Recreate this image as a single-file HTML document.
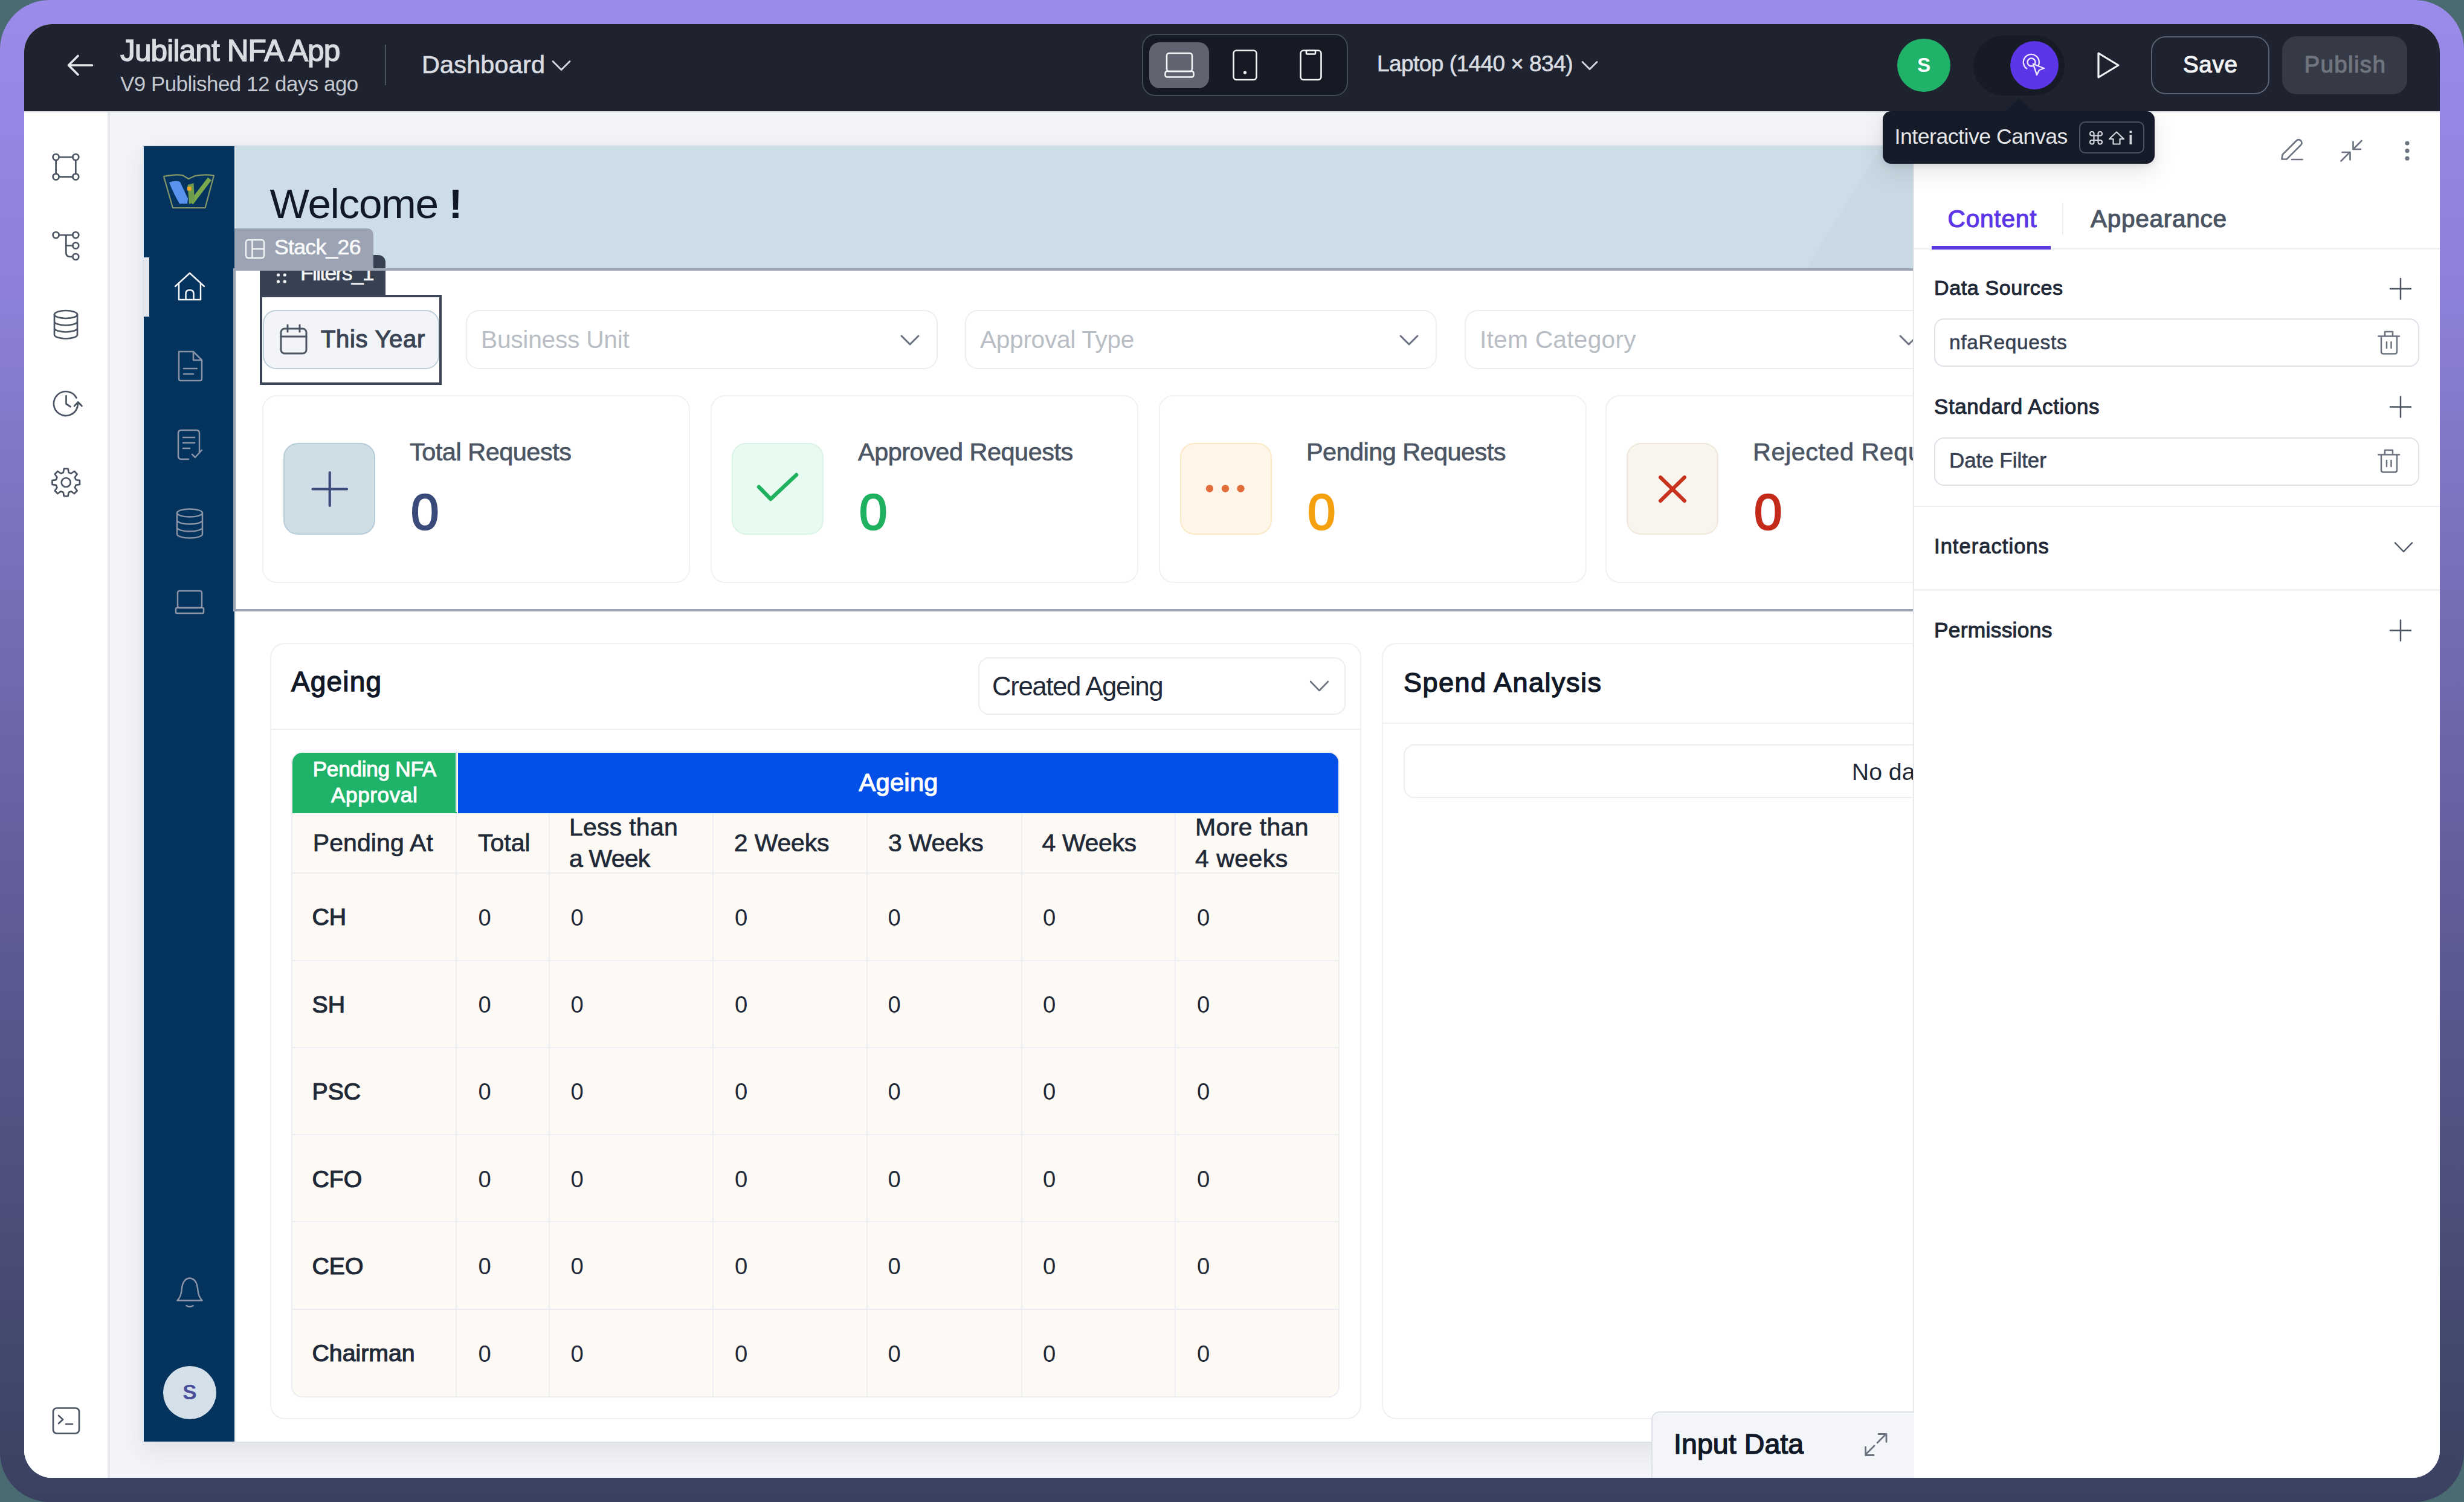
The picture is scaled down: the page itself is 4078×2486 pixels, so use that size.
<!DOCTYPE html><html><head><meta charset="utf-8"><style>
html,body{margin:0;padding:0;}
body{width:4078px;height:2486px;position:relative;overflow:hidden;background:#4b6b72;font-family:"Liberation Sans",sans-serif;}
.r{position:absolute;}
.t{position:absolute;white-space:nowrap;line-height:1;}
.t b{font-weight:700;}
#bg{position:absolute;left:0;top:0;width:4078px;height:2486px;border-radius:82px;background:linear-gradient(180deg,#9b8bea 0%,#8c80d8 20%,#736cb3 42%,#5e5b95 62%,#4a4d78 82%,#3a4160 100%);}
#app{position:absolute;left:0;top:0;width:4078px;height:2486px;clip-path:inset(40px round 46px);background:#fff;}
svg{position:absolute;left:0;top:0;}
</style></head><body>
<div id="bg"></div>
<div id="app">
<div class="r" style="left:40.0px;top:40.0px;width:3998.0px;height:144.0px;background:#1f2330;"></div>
<div class="r" style="left:40.0px;top:184.0px;width:3998.0px;height:2.0px;background:#d5d8de;"></div>
<div id="t0" class="t" style="left:199.0px;top:59.7px;font-size:49.56px;font-weight:400;color:#d9dce1;letter-spacing:-0.87px;-webkit-text-stroke:1.49px #d9dce1;">Jubilant NFA App</div>
<div id="t1" class="t" style="left:199.0px;top:121.5px;font-size:34.88px;font-weight:400;color:#c4c8cf;letter-spacing:-0.48px;">V9 Published 12 days ago</div>
<div class="r" style="left:637.0px;top:74.0px;width:2.0px;height:67.0px;background:#4b5260;"></div>
<div id="t2" class="t" style="left:698.0px;top:87.0px;font-size:41.28px;font-weight:400;color:#d9dce1;letter-spacing:0.25px;-webkit-text-stroke:0.74px #d9dce1;">Dashboard</div>
<div class="r" style="left:1890.0px;top:56.0px;width:341.0px;height:103.0px;background:#151a25;border:2px solid #434955;border-radius:22px;box-sizing:border-box;"></div>
<div class="r" style="left:1902.0px;top:70.0px;width:99.0px;height:75.5px;background:#5f6470;border-radius:17px;"></div>
<div id="t3" class="t" style="left:2279.0px;top:87.7px;font-size:36.92px;font-weight:400;color:#d9dce1;letter-spacing:-0.50px;-webkit-text-stroke:0.66px #d9dce1;">Laptop (1440 × 834)</div>
<div class="r" style="left:3140.0px;top:63.5px;width:88.0px;height:88.0px;background:#1fb268;border-radius:50%;"></div>
<div class="t" style="left:3140px;width:88px;text-align:center;top:91.2px;font-size:33.3px;font-weight:700;color:#fff;">S</div>
<div class="r" style="left:3266.0px;top:59.0px;width:151.0px;height:98.5px;background:#161b26;border-radius:50px;"></div>
<div class="r" style="left:3327.0px;top:68.0px;width:80.0px;height:80.0px;background:#5b35e6;border-radius:50%;"></div>
<div class="r" style="left:3560.0px;top:60.0px;width:195.5px;height:96.0px;border:2px solid #5b6170;border-radius:24px;box-sizing:border-box;"></div>
<div id="t4" class="t" style="left:3613.0px;top:88.4px;font-size:38.52px;font-weight:400;color:#f3f4f6;letter-spacing:0.67px;-webkit-text-stroke:1.16px #f3f4f6;">Save</div>
<div class="r" style="left:3776.5px;top:60.0px;width:207.5px;height:96.0px;background:#353a46;border-radius:24px;"></div>
<div id="t5" class="t" style="left:3813.5px;top:88.4px;font-size:38.52px;font-weight:400;color:#70757f;letter-spacing:1.33px;-webkit-text-stroke:1.16px #70757f;">Publish</div>
<div class="r" style="left:40.0px;top:186.0px;width:138.0px;height:2260.0px;background:#fff;"></div>
<div class="r" style="left:178.0px;top:186.0px;width:4.0px;height:2260.0px;background:#e8e9ee;"></div>
<div class="r" style="left:182.0px;top:186.0px;width:2984.0px;height:2260.0px;background:#f3f4f8;"></div>
<div class="r" style="left:236.0px;top:240.0px;width:3064.0px;height:2148.0px;background:#fff;border:2px solid #dde2ea;box-sizing:border-box;box-shadow:0 14px 36px rgba(30,40,60,0.09);"></div>
<div class="r" style="left:238.0px;top:242.0px;width:150.0px;height:2144.0px;background:#04335e;"></div>
<div class="r" style="left:388.0px;top:242.0px;width:2.0px;height:2144.0px;background:#e6ebf0;"></div>
<div class="r" style="left:238.0px;top:426.0px;width:9.0px;height:98.0px;background:#e3e6ec;"></div>
<div class="r" style="left:390.0px;top:242.0px;width:2910.0px;height:204.0px;background:#cddde7;"></div>
<div id="t6" class="t" style="left:446.6px;top:303.0px;font-size:69.33px;font-weight:400;color:#111827;letter-spacing:-1.38px;">Welcome <b>!</b></div>
<div class="r" style="left:270.0px;top:2261.0px;width:88.0px;height:88.0px;background:#d3e0ea;border-radius:50%;"></div>
<div class="t" style="left:270px;width:88px;text-align:center;top:2286.5px;font-size:34.9px;font-weight:700;color:#4a4e9a;">S</div>
<div class="r" style="left:430.0px;top:422.0px;width:208.0px;height:68.0px;background:#374151;border-radius:0 12px 0 0;"></div>
<div id="t7" class="t" style="left:497.0px;top:434.8px;font-size:35.61px;font-weight:400;color:#f3f4f6;letter-spacing:-1.75px;-webkit-text-stroke:0.64px #f3f4f6;">Filters_1</div>
<div class="r" style="left:386.0px;top:444.0px;width:2914.0px;height:568.0px;border:4px solid #9ca3b1;border-right:none;box-sizing:border-box;"></div>
<div class="r" style="left:388.0px;top:378.0px;width:230.0px;height:70.0px;background:#9ca3b3;border-radius:0 10px 0 0;"></div>
<div id="t8" class="t" style="left:454.0px;top:392.3px;font-size:35.61px;font-weight:400;color:#f9fafb;letter-spacing:-0.71px;-webkit-text-stroke:0.64px #f9fafb;">Stack_26</div>
<div class="r" style="left:430.0px;top:487.5px;width:301.0px;height:149.5px;border:4px solid #3b4557;box-sizing:border-box;"></div>
<div class="r" style="left:435.0px;top:513.0px;width:292.0px;height:98.0px;background:#f3f4f7;border:2px solid #bccfdb;border-radius:22px;box-sizing:border-box;"></div>
<div id="t9" class="t" style="left:531.0px;top:541.7px;font-size:39.97px;font-weight:400;color:#3b4454;letter-spacing:0.70px;-webkit-text-stroke:1.20px #3b4454;">This Year</div>
<div class="r" style="left:771.0px;top:513.0px;width:781.0px;height:98.0px;border:2px solid #eceef2;border-radius:22px;box-sizing:border-box;"></div>
<div id="t10" class="t" style="left:796.0px;top:541.5px;font-size:40.70px;font-weight:400;color:#b9bdc4;letter-spacing:-0.25px;">Business Unit</div>
<div class="r" style="left:1597.0px;top:513.0px;width:781.0px;height:98.0px;border:2px solid #eceef2;border-radius:22px;box-sizing:border-box;"></div>
<div id="t11" class="t" style="left:1622.0px;top:541.5px;font-size:40.70px;font-weight:400;color:#b9bdc4;letter-spacing:-0.33px;">Approval Type</div>
<div class="r" style="left:2424.0px;top:513.0px;width:781.0px;height:98.0px;border:2px solid #eceef2;border-radius:22px;box-sizing:border-box;"></div>
<div id="t12" class="t" style="left:2449.0px;top:541.5px;font-size:40.70px;font-weight:400;color:#b9bdc4;letter-spacing:0.25px;">Item Category</div>
<div class="r" style="left:434.0px;top:654.0px;width:708.0px;height:311.0px;border:2px solid #f0f1f5;border-radius:24px;box-sizing:border-box;"></div>
<div class="r" style="left:469.0px;top:733.0px;width:152.0px;height:152.0px;background:#cfdde7;border:2px solid #b9cdd9;border-radius:24px;box-sizing:border-box;"></div>
<div id="t13" class="t" style="left:678.0px;top:728.4px;font-size:41.42px;font-weight:400;color:#4b5563;letter-spacing:-0.46px;-webkit-text-stroke:0.75px #4b5563;">Total Requests</div>
<div id="t14" class="t" style="left:680.0px;top:806.2px;font-size:83.58px;font-weight:400;color:#3a4a7a;-webkit-text-stroke:2.51px #3a4a7a;">0</div>
<div class="r" style="left:1176.0px;top:654.0px;width:708.0px;height:311.0px;border:2px solid #f0f1f5;border-radius:24px;box-sizing:border-box;"></div>
<div class="r" style="left:1211.0px;top:733.0px;width:152.0px;height:152.0px;background:#e9fbf1;border:2px solid #dcf3e6;border-radius:24px;box-sizing:border-box;"></div>
<div id="t15" class="t" style="left:1420.0px;top:728.4px;font-size:41.42px;font-weight:400;color:#4b5563;letter-spacing:-0.47px;-webkit-text-stroke:0.75px #4b5563;">Approved Requests</div>
<div id="t16" class="t" style="left:1422.0px;top:806.2px;font-size:83.58px;font-weight:400;color:#1fb160;-webkit-text-stroke:2.51px #1fb160;">0</div>
<div class="r" style="left:1918.0px;top:654.0px;width:708.0px;height:311.0px;border:2px solid #f0f1f5;border-radius:24px;box-sizing:border-box;"></div>
<div class="r" style="left:1953.0px;top:733.0px;width:152.0px;height:152.0px;background:#fff6e9;border:2px solid #fde8c6;border-radius:24px;box-sizing:border-box;"></div>
<div id="t17" class="t" style="left:2162.0px;top:728.4px;font-size:41.42px;font-weight:400;color:#4b5563;letter-spacing:-0.53px;-webkit-text-stroke:0.75px #4b5563;">Pending Requests</div>
<div id="t18" class="t" style="left:2164.0px;top:806.2px;font-size:83.58px;font-weight:400;color:#f5a00f;-webkit-text-stroke:2.51px #f5a00f;">0</div>
<div class="r" style="left:2657.0px;top:654.0px;width:708.0px;height:311.0px;border:2px solid #f0f1f5;border-radius:24px;box-sizing:border-box;"></div>
<div class="r" style="left:2692.0px;top:733.0px;width:152.0px;height:152.0px;background:#f8f4ee;border:2px solid #eee8dc;border-radius:24px;box-sizing:border-box;"></div>
<div id="t19" class="t" style="left:2901.0px;top:728.4px;font-size:41.42px;font-weight:400;color:#4b5563;letter-spacing:0.50px;-webkit-text-stroke:0.75px #4b5563;">Rejected Requests</div>
<div id="t20" class="t" style="left:2903.0px;top:806.2px;font-size:83.58px;font-weight:400;color:#c42a1a;-webkit-text-stroke:2.51px #c42a1a;">0</div>
<div class="r" style="left:447.0px;top:1064.0px;width:1806.0px;height:1285.0px;border:2px solid #eef0f3;border-radius:24px;box-sizing:border-box;"></div>
<div class="r" style="left:449.0px;top:1206.0px;width:1802.0px;height:2.0px;background:#eef0f3;"></div>
<div id="t21" class="t" style="left:482.0px;top:1106.1px;font-size:45.93px;font-weight:400;color:#111827;letter-spacing:1.20px;-webkit-text-stroke:1.38px #111827;">Ageing</div>
<div class="r" style="left:1618.5px;top:1088.0px;width:608.5px;height:95.0px;border:2px solid #eceef2;border-radius:18px;box-sizing:border-box;"></div>
<div id="t22" class="t" style="left:1642.0px;top:1113.5px;font-size:43.90px;font-weight:400;color:#1f2937;letter-spacing:-1.46px;">Created Ageing</div>
<div class="r" style="left:482px;top:1244px;width:1735px;height:1069px;background:#fdf9f4;border-radius:18px;overflow:hidden;border:2px solid #eceef2;box-sizing:border-box;"><div class="r" style="left:0;top:0;width:272px;height:100px;background:#1fb36a;"></div><div class="r" style="left:274px;top:0;width:1461px;height:100px;background:#0350e8;"></div></div>
<div class="r" style="left:754.0px;top:1244.0px;width:2.0px;height:100.0px;background:#d8e4ee;"></div>
<div class="r" style="left:754.0px;top:1346.0px;width:2.0px;height:966.0px;background:#eceef2;"></div>
<div class="r" style="left:907.5px;top:1346.0px;width:2.0px;height:966.0px;background:#eceef2;"></div>
<div class="r" style="left:1179.0px;top:1346.0px;width:2.0px;height:966.0px;background:#eceef2;"></div>
<div class="r" style="left:1434.0px;top:1346.0px;width:2.0px;height:966.0px;background:#eceef2;"></div>
<div class="r" style="left:1690.0px;top:1346.0px;width:2.0px;height:966.0px;background:#eceef2;"></div>
<div class="r" style="left:1944.0px;top:1346.0px;width:2.0px;height:966.0px;background:#eceef2;"></div>
<div class="r" style="left:484.0px;top:1444.0px;width:1731.0px;height:2.0px;background:#eceef2;"></div>
<div class="r" style="left:484.0px;top:1588.5px;width:1731.0px;height:2.0px;background:#eceef2;"></div>
<div class="r" style="left:484.0px;top:1732.5px;width:1731.0px;height:2.0px;background:#eceef2;"></div>
<div class="r" style="left:484.0px;top:1876.5px;width:1731.0px;height:2.0px;background:#eceef2;"></div>
<div class="r" style="left:484.0px;top:2021.0px;width:1731.0px;height:2.0px;background:#eceef2;"></div>
<div class="r" style="left:484.0px;top:2165.5px;width:1731.0px;height:2.0px;background:#eceef2;"></div>
<div id="t23" class="t" style="left:517.7px;top:1254.7px;font-size:35.17px;font-weight:400;color:#fff;letter-spacing:-0.27px;-webkit-text-stroke:1.06px #fff;">Pending NFA</div>
<div id="t24" class="t" style="left:548.0px;top:1298.0px;font-size:35.17px;font-weight:400;color:#fff;letter-spacing:0.57px;-webkit-text-stroke:1.06px #fff;">Approval</div>
<div id="t25" class="t" style="left:1421.5px;top:1274.0px;font-size:41.57px;font-weight:400;color:#fff;letter-spacing:0.30px;-webkit-text-stroke:1.25px #fff;">Ageing</div>
<div id="t26" class="t" style="left:517.7px;top:1374.7px;font-size:40.99px;font-weight:400;color:#1f2937;letter-spacing:0.11px;-webkit-text-stroke:0.74px #1f2937;">Pending At</div>
<div id="t27" class="t" style="left:791.0px;top:1374.7px;font-size:40.99px;font-weight:400;color:#1f2937;letter-spacing:0.00px;-webkit-text-stroke:0.74px #1f2937;">Total</div>
<div id="t28" class="t" style="left:942.0px;top:1349.0px;font-size:40.99px;font-weight:400;color:#1f2937;letter-spacing:0.25px;-webkit-text-stroke:0.74px #1f2937;">Less than</div>
<div id="t29" class="t" style="left:942.0px;top:1401.3px;font-size:40.99px;font-weight:400;color:#1f2937;letter-spacing:-0.80px;-webkit-text-stroke:0.74px #1f2937;">a Week</div>
<div id="t30" class="t" style="left:1214.8px;top:1374.7px;font-size:40.99px;font-weight:400;color:#1f2937;letter-spacing:-0.17px;-webkit-text-stroke:0.74px #1f2937;">2 Weeks</div>
<div id="t31" class="t" style="left:1470.0px;top:1374.7px;font-size:40.99px;font-weight:400;color:#1f2937;letter-spacing:-0.17px;-webkit-text-stroke:0.74px #1f2937;">3 Weeks</div>
<div id="t32" class="t" style="left:1724.4px;top:1374.7px;font-size:40.99px;font-weight:400;color:#1f2937;letter-spacing:-0.33px;-webkit-text-stroke:0.74px #1f2937;">4 Weeks</div>
<div id="t33" class="t" style="left:1978.0px;top:1349.0px;font-size:40.99px;font-weight:400;color:#1f2937;letter-spacing:0.38px;-webkit-text-stroke:0.74px #1f2937;">More than</div>
<div id="t34" class="t" style="left:1978.0px;top:1401.3px;font-size:40.99px;font-weight:400;color:#1f2937;letter-spacing:0.50px;-webkit-text-stroke:0.74px #1f2937;">4 weeks</div>
<div id="t35" class="t" style="left:516.5px;top:1498.3px;font-size:39.24px;font-weight:400;color:#1f2937;-webkit-text-stroke:1.18px #1f2937;">CH</div>
<div id="t36" class="t" style="left:791.5px;top:1499.6px;font-size:38.23px;font-weight:400;color:#1f2937;">0</div>
<div id="t37" class="t" style="left:944.5px;top:1499.6px;font-size:38.23px;font-weight:400;color:#1f2937;">0</div>
<div id="t38" class="t" style="left:1216.0px;top:1499.6px;font-size:38.23px;font-weight:400;color:#1f2937;">0</div>
<div id="t39" class="t" style="left:1469.5px;top:1499.6px;font-size:38.23px;font-weight:400;color:#1f2937;">0</div>
<div id="t40" class="t" style="left:1726.0px;top:1499.6px;font-size:38.23px;font-weight:400;color:#1f2937;">0</div>
<div id="t41" class="t" style="left:1981.0px;top:1499.6px;font-size:38.23px;font-weight:400;color:#1f2937;">0</div>
<div id="t42" class="t" style="left:516.5px;top:1642.7px;font-size:39.24px;font-weight:400;color:#1f2937;-webkit-text-stroke:1.18px #1f2937;">SH</div>
<div id="t43" class="t" style="left:791.5px;top:1644.0px;font-size:38.23px;font-weight:400;color:#1f2937;">0</div>
<div id="t44" class="t" style="left:944.5px;top:1644.0px;font-size:38.23px;font-weight:400;color:#1f2937;">0</div>
<div id="t45" class="t" style="left:1216.0px;top:1644.0px;font-size:38.23px;font-weight:400;color:#1f2937;">0</div>
<div id="t46" class="t" style="left:1469.5px;top:1644.0px;font-size:38.23px;font-weight:400;color:#1f2937;">0</div>
<div id="t47" class="t" style="left:1726.0px;top:1644.0px;font-size:38.23px;font-weight:400;color:#1f2937;">0</div>
<div id="t48" class="t" style="left:1981.0px;top:1644.0px;font-size:38.23px;font-weight:400;color:#1f2937;">0</div>
<div id="t49" class="t" style="left:516.5px;top:1787.1px;font-size:39.24px;font-weight:400;color:#1f2937;-webkit-text-stroke:1.18px #1f2937;">PSC</div>
<div id="t50" class="t" style="left:791.5px;top:1788.4px;font-size:38.23px;font-weight:400;color:#1f2937;">0</div>
<div id="t51" class="t" style="left:944.5px;top:1788.4px;font-size:38.23px;font-weight:400;color:#1f2937;">0</div>
<div id="t52" class="t" style="left:1216.0px;top:1788.4px;font-size:38.23px;font-weight:400;color:#1f2937;">0</div>
<div id="t53" class="t" style="left:1469.5px;top:1788.4px;font-size:38.23px;font-weight:400;color:#1f2937;">0</div>
<div id="t54" class="t" style="left:1726.0px;top:1788.4px;font-size:38.23px;font-weight:400;color:#1f2937;">0</div>
<div id="t55" class="t" style="left:1981.0px;top:1788.4px;font-size:38.23px;font-weight:400;color:#1f2937;">0</div>
<div id="t56" class="t" style="left:516.5px;top:1931.5px;font-size:39.24px;font-weight:400;color:#1f2937;-webkit-text-stroke:1.18px #1f2937;">CFO</div>
<div id="t57" class="t" style="left:791.5px;top:1932.8px;font-size:38.23px;font-weight:400;color:#1f2937;">0</div>
<div id="t58" class="t" style="left:944.5px;top:1932.8px;font-size:38.23px;font-weight:400;color:#1f2937;">0</div>
<div id="t59" class="t" style="left:1216.0px;top:1932.8px;font-size:38.23px;font-weight:400;color:#1f2937;">0</div>
<div id="t60" class="t" style="left:1469.5px;top:1932.8px;font-size:38.23px;font-weight:400;color:#1f2937;">0</div>
<div id="t61" class="t" style="left:1726.0px;top:1932.8px;font-size:38.23px;font-weight:400;color:#1f2937;">0</div>
<div id="t62" class="t" style="left:1981.0px;top:1932.8px;font-size:38.23px;font-weight:400;color:#1f2937;">0</div>
<div id="t63" class="t" style="left:516.5px;top:2075.9px;font-size:39.24px;font-weight:400;color:#1f2937;-webkit-text-stroke:1.18px #1f2937;">CEO</div>
<div id="t64" class="t" style="left:791.5px;top:2077.2px;font-size:38.23px;font-weight:400;color:#1f2937;">0</div>
<div id="t65" class="t" style="left:944.5px;top:2077.2px;font-size:38.23px;font-weight:400;color:#1f2937;">0</div>
<div id="t66" class="t" style="left:1216.0px;top:2077.2px;font-size:38.23px;font-weight:400;color:#1f2937;">0</div>
<div id="t67" class="t" style="left:1469.5px;top:2077.2px;font-size:38.23px;font-weight:400;color:#1f2937;">0</div>
<div id="t68" class="t" style="left:1726.0px;top:2077.2px;font-size:38.23px;font-weight:400;color:#1f2937;">0</div>
<div id="t69" class="t" style="left:1981.0px;top:2077.2px;font-size:38.23px;font-weight:400;color:#1f2937;">0</div>
<div id="t70" class="t" style="left:516.5px;top:2220.3px;font-size:39.24px;font-weight:400;color:#1f2937;-webkit-text-stroke:1.18px #1f2937;">Chairman</div>
<div id="t71" class="t" style="left:791.5px;top:2221.6px;font-size:38.23px;font-weight:400;color:#1f2937;">0</div>
<div id="t72" class="t" style="left:944.5px;top:2221.6px;font-size:38.23px;font-weight:400;color:#1f2937;">0</div>
<div id="t73" class="t" style="left:1216.0px;top:2221.6px;font-size:38.23px;font-weight:400;color:#1f2937;">0</div>
<div id="t74" class="t" style="left:1469.5px;top:2221.6px;font-size:38.23px;font-weight:400;color:#1f2937;">0</div>
<div id="t75" class="t" style="left:1726.0px;top:2221.6px;font-size:38.23px;font-weight:400;color:#1f2937;">0</div>
<div id="t76" class="t" style="left:1981.0px;top:2221.6px;font-size:38.23px;font-weight:400;color:#1f2937;">0</div>
<div class="r" style="left:2287.0px;top:1064.0px;width:1013.0px;height:1285.0px;border:2px solid #eef0f3;border-radius:24px;box-sizing:border-box;"></div>
<div class="r" style="left:2289.0px;top:1196.0px;width:1011.0px;height:2.0px;background:#eef0f3;"></div>
<div id="t77" class="t" style="left:2323.0px;top:1106.8px;font-size:45.06px;font-weight:400;color:#111827;letter-spacing:1.46px;-webkit-text-stroke:1.35px #111827;">Spend Analysis</div>
<div class="r" style="left:2322.5px;top:1232.0px;width:1077.5px;height:89.0px;border:2px solid #eceef2;border-radius:18px;box-sizing:border-box;"></div>
<div id="t78" class="t" style="left:3064.8px;top:1257.8px;font-size:39.24px;font-weight:400;color:#1f2937;">No data available</div>
<div class="r" style="left:3166.0px;top:186.0px;width:872.0px;height:2260.0px;background:#fff;border-left:2px solid #e5e7eb;box-sizing:border-box;"></div>
<div id="t79" class="t" style="left:3223.6px;top:341.5px;font-size:40.41px;font-weight:400;color:#5b35e6;letter-spacing:0.88px;-webkit-text-stroke:1.21px #5b35e6;">Content</div>
<div id="t80" class="t" style="left:3460.0px;top:341.5px;font-size:40.41px;font-weight:400;color:#4b5563;letter-spacing:0.78px;-webkit-text-stroke:1.21px #4b5563;">Appearance</div>
<div class="r" style="left:3412.5px;top:335.0px;width:2.0px;height:54.0px;background:#eef0f3;"></div>
<div class="r" style="left:3168.0px;top:410.0px;width:870.0px;height:3.0px;background:#eef0f3;"></div>
<div class="r" style="left:3197.0px;top:407.0px;width:197.0px;height:6.0px;background:#5b35e6;"></div>
<div id="t81" class="t" style="left:3201.0px;top:459.2px;font-size:34.01px;font-weight:400;color:#1f2937;letter-spacing:0.64px;-webkit-text-stroke:1.02px #1f2937;">Data Sources</div>
<div class="r" style="left:3201.0px;top:527.0px;width:803.0px;height:80.0px;border:2px solid #dde1e8;border-radius:16px;box-sizing:border-box;"></div>
<div id="t82" class="t" style="left:3226.0px;top:549.7px;font-size:33.43px;font-weight:400;color:#374151;letter-spacing:0.70px;-webkit-text-stroke:0.60px #374151;">nfaRequests</div>
<div id="t83" class="t" style="left:3201.0px;top:655.5px;font-size:34.88px;font-weight:400;color:#1f2937;letter-spacing:0.65px;-webkit-text-stroke:1.05px #1f2937;">Standard Actions</div>
<div class="r" style="left:3201.0px;top:724.0px;width:803.0px;height:80.0px;border:2px solid #dde1e8;border-radius:16px;box-sizing:border-box;"></div>
<div id="t84" class="t" style="left:3226.0px;top:744.5px;font-size:34.88px;font-weight:400;color:#374151;letter-spacing:0.00px;-webkit-text-stroke:0.63px #374151;">Date Filter</div>
<div class="r" style="left:3168.0px;top:836.5px;width:870.0px;height:2.5px;background:#eef0f3;"></div>
<div id="t85" class="t" style="left:3201.0px;top:886.5px;font-size:34.45px;font-weight:400;color:#1f2937;letter-spacing:1.07px;-webkit-text-stroke:1.03px #1f2937;">Interactions</div>
<div class="r" style="left:3168.0px;top:975.0px;width:870.0px;height:2.5px;background:#eef0f3;"></div>
<div id="t86" class="t" style="left:3201.0px;top:1025.1px;font-size:35.32px;font-weight:400;color:#1f2937;letter-spacing:0.30px;-webkit-text-stroke:1.06px #1f2937;">Permissions</div>
<div class="r" style="left:2733.0px;top:2336.0px;width:435.0px;height:114.0px;background:#f3f5f8;border:2px solid #dde2e8;border-right:none;border-radius:14px 0 0 0;box-sizing:border-box;"></div>
<div id="t87" class="t" style="left:2770.0px;top:2366.6px;font-size:46.51px;font-weight:400;color:#111827;letter-spacing:0.07px;-webkit-text-stroke:1.40px #111827;">Input Data</div>
<div class="r" style="left:0;top:0;width:4078px;height:2486px;clip-path:polygon(3114px 242px,3166px 242px,3166px 444px,2990px 444px);background:rgba(20,40,70,0.018);"></div>
<div class="r" style="left:3116.0px;top:184.0px;width:450.0px;height:87.0px;background:#151b28;border-radius:14px;box-shadow:0 14px 40px rgba(0,0,0,0.10),0 4px 10px rgba(0,0,0,0.08);"></div>
<div id="t88" class="t" style="left:3135.5px;top:208.8px;font-size:35.61px;font-weight:400;color:#e5e7eb;letter-spacing:-0.47px;">Interactive Canvas</div>
<div class="r" style="left:3441.0px;top:200.5px;width:108.0px;height:53.5px;border:2px solid #4b5260;border-radius:10px;box-sizing:border-box;"></div>
<svg width="4078" height="2486" viewBox="0 0 4078 2486">
<defs><clipPath id="cv"><rect x="182" y="186" width="2984" height="2260"/></clipPath></defs>
<path d="M152.5,108 H114 M129,92.5 L113.5,108 L129,123.5" stroke="#e5e7eb" stroke-width="3.6" fill="none" stroke-linecap="round" stroke-linejoin="round"/>
<path d="M915,101.5 L929,115.5 L943,101.5" stroke="#d1d5db" stroke-width="3" fill="none" stroke-linecap="round" stroke-linejoin="round"/>
<g stroke="#f3f4f6" stroke-width="2.6" fill="none" stroke-linejoin="round"><rect x="1931" y="88" width="42" height="30" rx="4"/><rect x="1928.5" y="118" width="47" height="9.5" rx="3"/><rect x="2041.5" y="83.5" width="38" height="48.5" rx="5"/><rect x="2152.5" y="83.5" width="34" height="48.5" rx="5"/><rect x="2162" y="83.5" width="15" height="6" rx="1.5"/></g><circle cx="2060.5" cy="120" r="2.6" fill="#f3f4f6"/>
<path d="M2619,102.5 L2631,114.5 L2643,102.5" stroke="#d1d5db" stroke-width="3" fill="none" stroke-linecap="round" stroke-linejoin="round"/>
<g stroke="#e9e5ff" stroke-width="2.4" fill="none"><path d="M3372,111 A13,13 0 1 0 3355,114"/><circle cx="3362" cy="103" r="6.5"/><path d="M3365,106 L3383,113 L3375,116 L3371,124 Z" fill="#5b35e6" stroke-linejoin="round"/></g>
<path d="M3473,88 L3506,108 L3473,128 Z" stroke="#f3f4f6" stroke-width="3.2" fill="none" stroke-linejoin="round"/>
<g stroke="#4b5563" stroke-width="2.7" fill="none" stroke-linecap="round" stroke-linejoin="round">
<circle cx="92.6" cy="260" r="5"/>
<circle cx="125.3" cy="260" r="5"/>
<circle cx="92.6" cy="292.6" r="5"/>
<circle cx="125.3" cy="292.6" r="5"/>
<path d="M97.6,260 H120.3 M97.6,292.6 H120.3 M92.6,265 V287.6 M125.3,265 V287.6"/>
<circle cx="92.6" cy="389" r="5"/>
<circle cx="125.3" cy="389" r="5"/>
<circle cx="125.3" cy="406.5" r="5"/>
<circle cx="125.3" cy="425" r="5"/>
<path d="M97.6,389 H120.3 M109.3,389 V418 Q109.3,425 116,425 H120.3 M109.3,406.5 H120.3"/>
<ellipse cx="109" cy="520.5" rx="19" ry="6.5"/><path d="M90,520.5 V554 A19,6.5 0 0 0 128,554 V520.5 M90,532 A19,6.5 0 0 0 128,532 M90,543 A19,6.5 0 0 0 128,543"/>
<path d="M126.5,658.5 A20,20 0 1 0 128,674"/><path d="M109.5,655 V668.5 L116.5,673"/><path d="M128,674.5 L129.3,666 M123,672 L129.3,665.5 L135.5,672" />
<polygon points="104.80,782.08 105.80,775.75 112.60,775.75 113.60,782.08 117.70,783.78 122.88,780.01 127.69,784.82 123.92,790.00 125.62,794.10 131.95,795.10 131.95,801.90 125.62,802.90 123.92,807.00 127.69,812.18 122.88,816.99 117.70,813.22 113.60,814.92 112.60,821.25 105.80,821.25 104.80,814.92 100.70,813.22 95.52,816.99 90.71,812.18 94.48,807.00 92.78,802.90 86.45,801.90 86.45,795.10 92.78,794.10 94.48,790.00 90.71,784.82 95.52,780.01 100.70,783.78" stroke-width="2.7"/>
<circle cx="109.2" cy="798.5" r="7.5"/>
<rect x="88" y="2330.5" width="43" height="42" rx="6"/><path d="M97,2343 L104,2349.5 L97,2356 M109,2357 H120"/>
</g>
<g><path d="M271,292 Q290,288 302,290 L312,296 L323,291 Q338,288 354,290.5 L339.5,344 L286,344 Z" fill="none" stroke="#84976a" stroke-width="2.2" stroke-linejoin="round"/><path d="M280,302 Q289,298 298,301 L311,329 L310,337 L297,337 Q288,322 280,302 Z" fill="#5a93ee"/><path d="M316.5,336 L347,296" stroke="#79a94c" stroke-width="7.5" stroke-linecap="butt"/><path d="M310.5,306 L320.5,303 L322,334 L313,338 Z" fill="#6f9c4c"/><rect x="310" y="309" width="6.5" height="6.5" fill="#f5a623"/></g>
<g stroke-width="2.5" fill="none" stroke-linecap="round" stroke-linejoin="round">
<path d="M290,474 L314,452 L338,474 M296,468 V496 H332 V468 M307.5,496 V486 Q307.5,480 314,480 Q320.5,480 320.5,486 V496" stroke="#f5f7fa"/>
<path d="M296,582 H320 L334,596 V627 Q334,630 331,630 H299 Q296,630 296,627 Z M320,582 V596 H334 M304,610 H326 M304,619 H320" stroke="#8b94a6"/>
<path d="M330,748 V717 Q330,712 325,712 H300 Q295,712 295,717 V755 Q295,760 300,760 H312 M303,724 H322 M303,733 H322 M303,742 H314 M318,752 L323,757 L334,745" stroke="#8b94a6"/>
<ellipse cx="314" cy="849" rx="21" ry="6.5" stroke="#8b94a6"/><path d="M293,849 V884 A21,6.5 0 0 0 335,884 V849 M293,861 A21,6.5 0 0 0 335,861 M293,873 A21,6.5 0 0 0 335,873" stroke="#8b94a6"/>
<rect x="294" y="978" width="40" height="28" rx="3" stroke="#8b94a6"/><rect x="291" y="1006" width="46" height="9" rx="2" stroke="#8b94a6"/>
<path d="M293.5,2152.5 Q299.5,2146 300.5,2136 Q302,2116 314,2115.5 Q326,2116 327.5,2136 Q328.5,2146 334.5,2152.5 Z M308.5,2161 Q314,2164.5 319.5,2161" stroke="#8b94a6"/>
</g>
<g fill="#f3f4f6"><circle cx="460.5" cy="455" r="2.6"/><circle cx="471.3" cy="455" r="2.6"/><circle cx="460.5" cy="466" r="2.6"/><circle cx="471.3" cy="466" r="2.6"/></g>
<g stroke="#f3f4f6" stroke-width="2.4" fill="none"><rect x="407" y="397" width="30" height="30" rx="4"/><path d="M417.5,397 V427 M417.5,412 H437"/></g>
<g stroke="#4b5563" stroke-width="3" fill="none" stroke-linecap="round"><rect x="465" y="544" width="42" height="41" rx="6"/><path d="M465,557 H507 M476,538 V549 M496,538 V549"/></g>
<path clip-path="url(#cv)" d="M1492,556 L1506,570 L1520,556" stroke="#6b7280" stroke-width="3" fill="none" stroke-linecap="round" stroke-linejoin="round"/>
<path clip-path="url(#cv)" d="M2318,556 L2332,570 L2346,556" stroke="#6b7280" stroke-width="3" fill="none" stroke-linecap="round" stroke-linejoin="round"/>
<path clip-path="url(#cv)" d="M3145,556 L3159,570 L3173,556" stroke="#6b7280" stroke-width="3" fill="none" stroke-linecap="round" stroke-linejoin="round"/>
<path d="M545.75,782 V837 M517.5,809.5 H574" stroke="#3d4b7a" stroke-width="4.2" stroke-linecap="round"/>
<path d="M1256,806 L1275.5,826 L1318,786" stroke="#20b15f" stroke-width="6.5" fill="none" stroke-linecap="round" stroke-linejoin="round"/>
<g fill="#e06d3a"><circle cx="2002" cy="808.7" r="6.2"/><circle cx="2028" cy="808.7" r="6.2"/><circle cx="2053.5" cy="808.7" r="6.2"/></g>
<path d="M2748,790 L2788,829 M2788,790 L2748,829" stroke="#c8331e" stroke-width="6" stroke-linecap="round"/>
<path d="M2169,1128 L2183.5,1143 L2198,1128" stroke="#6b7280" stroke-width="2.6" fill="none" stroke-linecap="round" stroke-linejoin="round"/>
<g stroke="#6b7280" stroke-width="2.6" fill="none" stroke-linecap="round" stroke-linejoin="round"><path d="M3776.5,263.5 L3777.5,256 L3801,232.5 Q3804.5,229.5 3808,233 Q3811,236.5 3808,240 L3784.5,263.5 Z"/><path d="M3793,264 H3810.5"/><path d="M3908.5,233 L3894.5,247 M3894.5,234.5 V247 H3907"/><path d="M3874.5,266.5 L3888.5,252.5 M3876.5,252 H3889.5 V264.5"/></g><g fill="#6b7280"><circle cx="3984" cy="237" r="3.6"/><circle cx="3984" cy="249.6" r="3.6"/><circle cx="3984" cy="262.2" r="3.6"/></g>
<g stroke="#4b5563" stroke-width="2.5" fill="none" stroke-linecap="round" stroke-linejoin="round">
<path d="M3973,461 V495 M3956,478 H3990"/>
<path d="M3973,656.5 V690.5 M3956,673.5 H3990"/>
<path d="M3973,1026.5 V1060.5 M3956,1043.5 H3990"/>
<path stroke="#6b7280" d="M3936.5,556.5 H3971 M3947,556.5 V549 H3960 V556.5 M3941,556.5 V582 Q3941,585.5 3944.5,585.5 H3963.5 Q3967,585.5 3967,582 V556.5 M3950,566 V576 M3957.5,566 V576"/>
<path stroke="#6b7280" d="M3936.5,752.5 H3971 M3947,752.5 V745 H3960 V752.5 M3941,752.5 V778 Q3941,781.5 3944.5,781.5 H3963.5 Q3967,781.5 3967,778 V752.5 M3950,762 V772 M3957.5,762 V772"/>
<path d="M3964,898.5 L3978,913 L3992,898.5"/>
</g>
<g stroke="#6b7280" stroke-width="2.8" fill="none" stroke-linecap="round" stroke-linejoin="round"><path d="M3107,2388 L3121,2374 M3109,2373.5 H3122 V2386.5 M3102,2393 L3088,2407 M3087.5,2395 V2408.5 H3101"/></g>
<path d="M3318,185 L3341.5,163 L3365,185 Z" fill="#151b28"/>
<g stroke="#d1d5db" stroke-width="2.2" fill="none" stroke-linejoin="round"><path d="M3465.5,224.5 H3472.5 V232 H3465.5 Z"/><path d="M3465.5,224.5 V220.5 A3.3,3.3 0 1 0 3461.5,224.5 Z M3472.5,224.5 V220.5 A3.3,3.3 0 1 1 3476.5,224.5 Z M3465.5,232 V236 A3.3,3.3 0 1 1 3461.5,232 Z M3472.5,232 V236 A3.3,3.3 0 1 0 3476.5,232 Z"/><path d="M3503,218.5 L3515,230 H3508.5 V238.5 H3497.5 V230 H3491 Z"/></g><rect x="3524.5" y="223" width="3.6" height="16" fill="#d1d5db"/><rect x="3524.5" y="216.5" width="3.6" height="3.6" fill="#d1d5db"/>
</svg>
</div>
</body></html>
